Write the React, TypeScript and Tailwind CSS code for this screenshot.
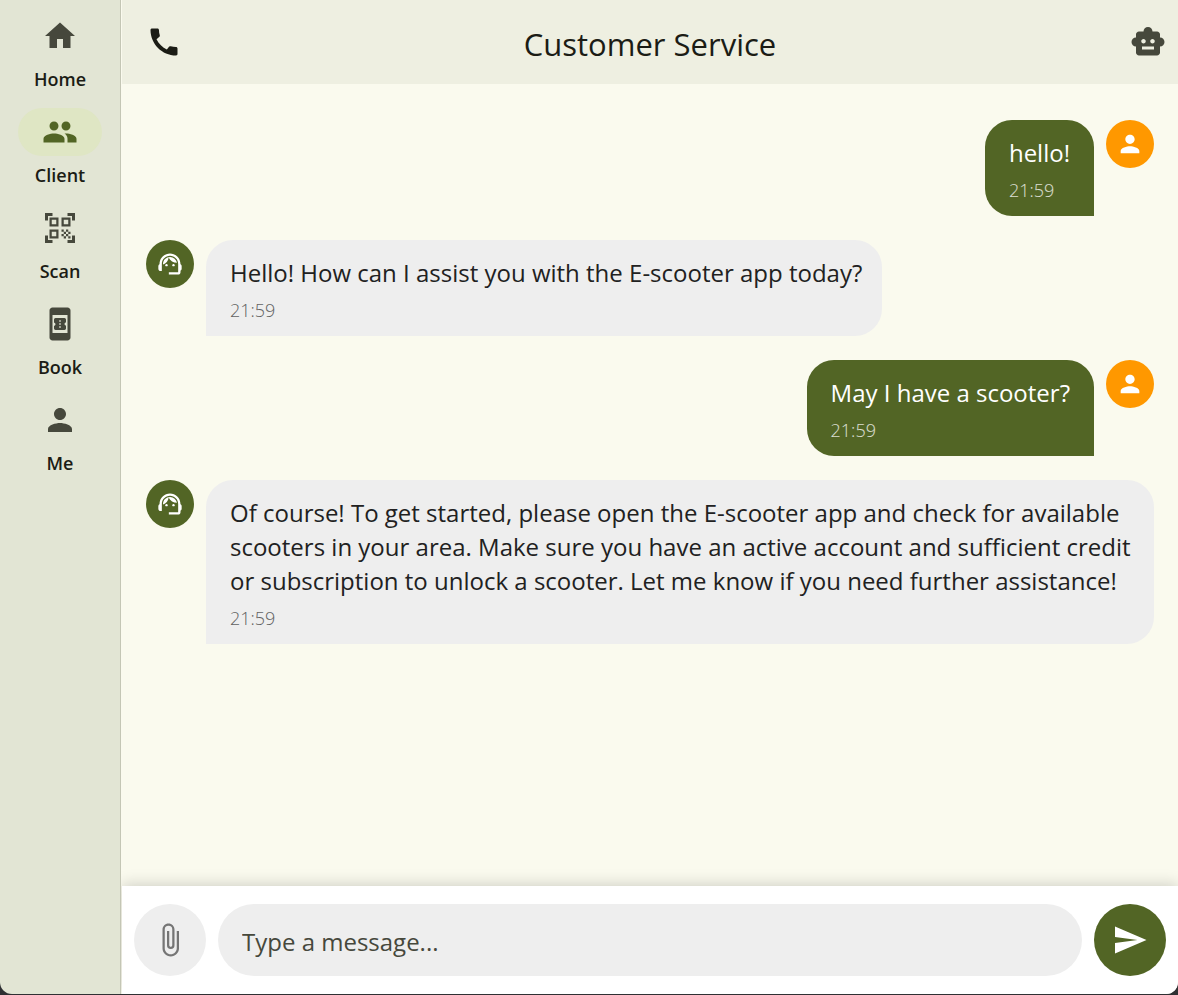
import { useState } from "react";
import type { FormEvent } from "react";
import type { IconType } from "react-icons";
import {
  MdAttachFile,
  MdBookOnline,
  MdCall,
  MdHome,
  MdPeople,
  MdPerson,
  MdQrCodeScanner,
  MdSend,
  MdSmartToy,
  MdSupportAgent,
} from "react-icons/md";

type NavItem = { label: string; icon: IconType; active?: boolean };
type Message = { from: "user" | "agent"; text: string; time: string };

const navItems: NavItem[] = [
  { label: "Home", icon: MdHome },
  { label: "Client", icon: MdPeople, active: true },
  { label: "Scan", icon: MdQrCodeScanner },
  { label: "Book", icon: MdBookOnline },
  { label: "Me", icon: MdPerson },
];

const initialMessages: Message[] = [
  { from: "user", text: "hello!", time: "21:59" },
  { from: "agent", text: "Hello! How can I assist you with the E-scooter app today?", time: "21:59" },
  { from: "user", text: "May I have a scooter?", time: "21:59" },
  {
    from: "agent",
    text: "Of course! To get started, please open the E-scooter app and check for available scooters in your area. Make sure you have an active account and sufficient credit or subscription to unlock a scooter. Let me know if you need further assistance!",
    time: "21:59",
  },
];

function Sidebar() {
  return (
    <nav
      aria-label="Main"
      className="flex w-[121px] shrink-0 flex-col items-center gap-[18px] border-r border-[#c4c6b5] bg-[#e2e5d4] pt-3"
    >
      {navItems.map(({ label, icon: Icon, active }) => (
        <a
          key={label}
          href={`#${label.toLowerCase()}`}
          aria-current={active ? "page" : undefined}
          className="flex flex-col items-center gap-2"
        >
          <span
            className={
              active
                ? "flex h-12 w-[84px] items-center justify-center rounded-full bg-[#dfe6c4] text-[#526525]"
                : "flex h-12 w-[84px] items-center justify-center rounded-full text-[#46483c]"
            }
          >
            <Icon className="size-9" aria-hidden />
          </span>
          <span className="text-lg/[22px] font-semibold text-[#1b1c15]">{label}</span>
        </a>
      ))}
    </nav>
  );
}

function Header() {
  return (
    <header className="grid h-[84px] shrink-0 grid-cols-[1fr_auto_1fr] items-center bg-[#eeefe1] px-3">
      <button type="button" aria-label="Call" className="justify-self-start pl-3 text-[#1b1c15]">
        <MdCall className="size-9" aria-hidden />
      </button>
      <h1 className="pt-1 text-[31px]/10 text-[#1b1c15]">Customer Service</h1>
      <button type="button" aria-label="Assistant" className="justify-self-end text-[#46483c]">
        <MdSmartToy className="size-9" aria-hidden />
      </button>
    </header>
  );
}

function ChatMessage({ message }: { message: Message }) {
  const own = message.from === "user";
  return (
    <li className={own ? "flex flex-row-reverse items-start gap-3" : "flex items-start gap-3"}>
      <span
        className={
          own
            ? "flex size-12 shrink-0 items-center justify-center rounded-full bg-[#ff9800] text-white"
            : "flex size-12 shrink-0 items-center justify-center rounded-full bg-[#526525] text-white"
        }
      >
        {own ? <MdPerson className="size-7" aria-hidden /> : <MdSupportAgent className="size-7" aria-hidden />}
      </span>
      <div
        className={
          own
            ? "rounded-[27px] rounded-br-none bg-[#526525] px-6 pt-4 pb-[15px] text-white"
            : "rounded-[27px] rounded-bl-none bg-[#eeeeee] pt-4 pr-5 pb-[15px] pl-6 text-[#212121]"
        }
      >
        <p className="text-2xl/[34px]">{message.text}</p>
        <time
          className={
            own
              ? "mt-2.5 block text-lg/[21px] font-light text-white/80"
              : "mt-2.5 block text-lg/[21px] font-light text-[#616161]"
          }
        >
          {message.time}
        </time>
      </div>
    </li>
  );
}

function Composer({ onSend }: { onSend: (text: string) => void }) {
  const [draft, setDraft] = useState("");

  const submit = (event: FormEvent) => {
    event.preventDefault();
    if (draft.trim()) {
      onSend(draft.trim());
      setDraft("");
    }
  };

  return (
    <form
      onSubmit={submit}
      className="flex shrink-0 items-center gap-3 bg-white px-3 py-[18px] shadow-[0_-2px_14px_rgba(0,0,0,0.17)]"
    >
      <button
        type="button"
        aria-label="Attach file"
        className="flex size-[72px] shrink-0 items-center justify-center rounded-full bg-[#eeeeee] text-[#757575]"
      >
        <MdAttachFile className="size-9" aria-hidden />
      </button>
      <input
        type="text"
        aria-label="Message"
        placeholder="Type a message..."
        value={draft}
        onChange={(event) => setDraft(event.target.value)}
        className="h-[72px] min-w-0 flex-1 rounded-full bg-[#eeeeee] px-6 pt-0.5 text-2xl text-[#1b1c15] outline-none placeholder:text-[#46483c]"
      />
      <button
        type="submit"
        aria-label="Send"
        className="flex size-[72px] shrink-0 items-center justify-center rounded-full bg-[#526525] text-white"
      >
        <MdSend className="size-9" aria-hidden />
      </button>
    </form>
  );
}

export default function App() {
  const [messages, setMessages] = useState(initialMessages);

  return (
    <div className="flex h-screen flex-col bg-[#2f3033] pb-px font-['Open_Sans','Noto_Sans',sans-serif]">
      <div className="flex min-h-0 flex-1 overflow-hidden rounded-b-xl">
        <Sidebar />
        <main className="flex min-w-0 flex-1 flex-col overflow-hidden bg-[#fafaee] pl-px">
          <Header />
          <ul className="flex min-h-0 flex-1 flex-col gap-6 overflow-y-auto px-6 py-9">
            {messages.map((message, index) => (
              <ChatMessage key={index} message={message} />
            ))}
          </ul>
          <Composer onSend={(text) => setMessages([...messages, { from: "user", text, time: "21:59" }])} />
        </main>
      </div>
    </div>
  );
}
